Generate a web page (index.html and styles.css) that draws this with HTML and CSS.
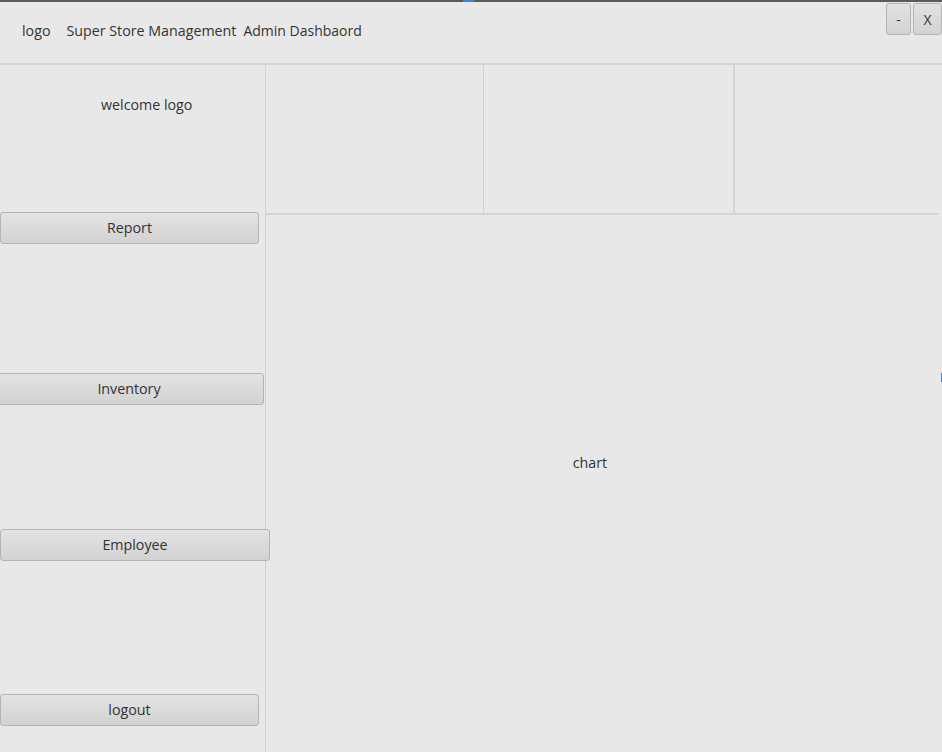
FILE: index.html
```html
<!DOCTYPE html>
<html>
<head>
<meta charset="utf-8">
<link rel="stylesheet" href="styles.css">
</head>
<body>
<div class="app">
  <div class="topline"><span class="blue-mark"></span></div>
  <header class="header">
    <div class="titles">
      <span class="t-logo">logo</span>
      <span class="t-store">Super Store Management</span>
      <span class="t-admin">Admin Dashbaord</span>
    </div>
    <div class="win-btns">
      <button class="win-btn">-</button>
      <button class="win-btn">X</button>
    </div>
  </header>
  <div class="main">
    <aside class="sidebar">
      <div class="welcome">welcome logo</div>
      <button class="nav-btn btn-report">Report</button>
      <button class="nav-btn btn-inventory">Inventory</button>
      <button class="nav-btn btn-employee">Employee</button>
      <button class="nav-btn btn-logout">logout</button>
    </aside>
    <section class="content">
      <div class="cards">
        <div class="card card-1"></div>
        <div class="card card-2"></div>
        <div class="card card-3"></div>
      </div>
      <div class="chart">chart</div>
    </section>
  </div>
  <span class="side-mark"></span>
</div>
</body>
</html>
```

FILE: styles.css
```css
* { box-sizing: border-box; }
html, body { margin: 0; padding: 0; }
body {
  width: 942px;
  height: 752px;
  overflow: hidden;
  background: #e8e8e8;
  font-family: "Open Sans", "Noto Sans", sans-serif;
  color: #333;
}
.app {
  position: relative;
  width: 942px;
  height: 752px;
  display: flex;
  flex-direction: column;
}
.topline {
  height: 2px;
  background: #5a5a5a;
  position: relative;
  flex: none;
}
.blue-mark {
  position: absolute;
  left: 463px;
  top: 0;
  width: 11px;
  height: 2px;
  background: #3b82e6;
}
.header {
  height: 63px;
  flex: none;
  display: flex;
  justify-content: space-between;
  border-bottom: 2px solid #d3d3d3;
}
.titles {
  display: flex;
  align-items: center;
  padding-left: 22px;
  font-size: 14.25px;
  height: 57px;
}
.t-logo { margin-right: 16px; }
.t-store { margin-right: 7px; }
.t-admin { font-size: 14px; }
.win-btns {
  display: flex;
  gap: 2px;
  padding-top: 1px;
  align-self: flex-start;
}
.win-btn {
  width: 25px;
  height: 32px;
  border: 1px solid #b4b4b4;
  border-radius: 3px;
  background: linear-gradient(#e2e2e2, #d3d3d3);
  font-family: "Open Sans", sans-serif;
  font-size: 14px;
  color: #333;
  padding: 0;
}
.win-btn + .win-btn { width: 29px; }
.main {
  flex: 1;
  display: flex;
}
.sidebar {
  width: 266px;
  flex: none;
  border-right: 1px solid #d3d3d3;
  display: flex;
  flex-direction: column;
  position: relative;
  z-index: 1;
}
.welcome {
  height: 147px;
  padding-top: 30px;
  padding-left: 101px;
  font-size: 14.25px;
}
.nav-btn {
  height: 32px;
  border: 1px solid #b4b4b4;
  border-radius: 3px;
  background: linear-gradient(#e3e3e3, #d2d2d2);
  font-family: "Open Sans", sans-serif;
  font-size: 14.25px;
  color: #333;
  padding: 0 0 2px 0;
  flex: none;
}
.btn-report { width: 259px; margin-left: 0; }
.btn-inventory { width: 270px; margin-left: -6px; margin-top: 129px; }
.btn-employee { width: 270px; margin-left: 0; margin-top: 124px; }
.btn-logout { width: 259px; margin-left: 0; margin-top: 133px; }
.content {
  flex: 1;
  display: flex;
  flex-direction: column;
}
.cards {
  height: 150px;
  display: flex;
  width: 672px;
  border-bottom: 2px solid #d3d3d3;
}
.card-1 { width: 218px; border-right: 1px solid #d0d0d0; }
.card-2 { width: 251px; border-right: 2px solid #d3d3d3; }
.card-3 { flex: 1; }
.chart {
  flex: 1;
  display: flex;
  align-items: center;
  justify-content: center;
  font-size: 14.25px;
  padding-bottom: 42px;
  padding-right: 28px;
}
.side-mark {
  position: absolute;
  right: 0;
  top: 373px;
  width: 1px;
  height: 9px;
  background: #3b82e6;
}
```
